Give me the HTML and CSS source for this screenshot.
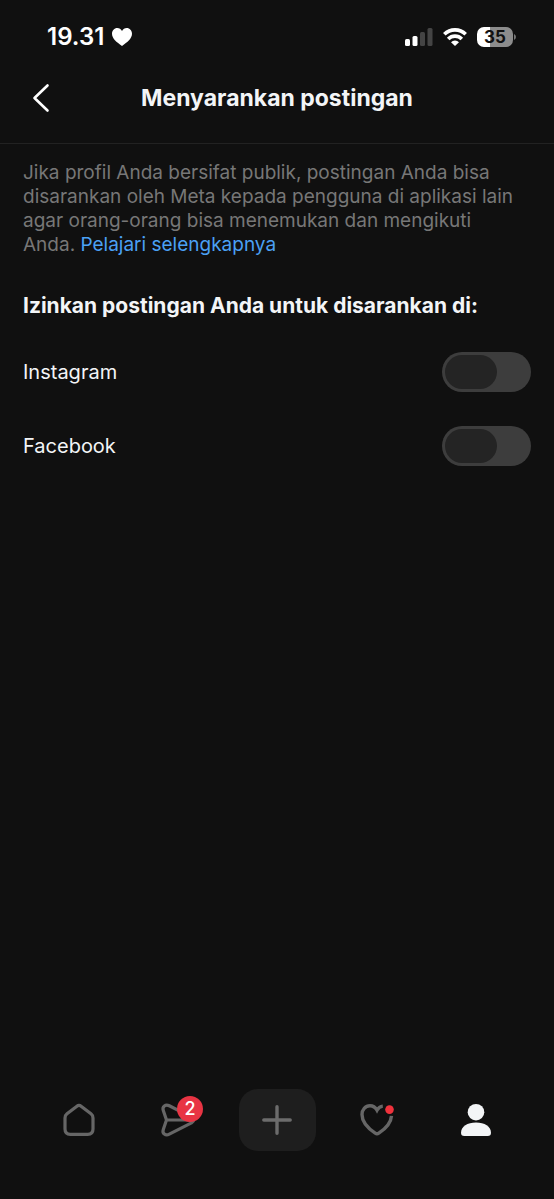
FILE: index.html
```html
<!DOCTYPE html>
<html lang="id">
<head>
<meta charset="utf-8">
<meta name="viewport" content="width=device-width, initial-scale=1">
<title>Menyarankan postingan</title>
<link rel="stylesheet" href="styles.css">
</head>
<body>
<div class="screen">
  <div class="status">
    <div class="status-left">
      <span class="time">19.31</span>
      <svg class="heart" width="20" height="18" viewBox="0 0 20 18" aria-hidden="true"><path d="M10 18C4.500 14.200 0 10.400 0 5.800C0 2.500 2.300 0 5.300 0C7.300 0 9 1.100 10 2.900C11 1.100 12.700 0 14.700 0C17.700 0 20 2.500 20 5.800C20 10.400 15.500 14.200 10 18Z" fill="#fff"/></svg>
    </div>
    <div class="status-right">
      <svg width="28" height="18" viewBox="0 0 28 18" aria-hidden="true"><rect x="0" y="11" width="5" height="7" rx="1.500" fill="#fff"/><rect x="7.500" y="8" width="5" height="10" rx="1.500" fill="#fff"/><rect x="15" y="4" width="5" height="14" rx="1.500" fill="#444"/><rect x="22.500" y="0" width="5" height="18" rx="1.500" fill="#444"/></svg>
      <svg width="24" height="18" viewBox="0 0 24 18" aria-hidden="true"><g fill="none" stroke="#fff" stroke-width="3.600"><path d="M1.300 6.300A15.200 15.200 0 0 1 22.700 6.300"/><path d="M5.200 10.900A9.600 9.600 0 0 1 18.800 10.900"/></g><path d="M12 18L8 14.200A5.800 5.800 0 0 1 16 14.200Z" fill="#fff"/></svg>
      <div class="battery"><span class="battery-level">35</span><svg width="2" height="6" viewBox="0 0 2 6" aria-hidden="true"><path d="M0 0Q2 1 2 3T0 6Z" fill="#777"/></svg></div>
    </div>
  </div>
  <header class="header">
    <button class="back" type="button" aria-label="Kembali"><svg width="18" height="30" viewBox="0 0 18 30" aria-hidden="true"><path d="M15.500 2.500L2.500 15L15.500 27.500" fill="none" stroke="#fff" stroke-width="2.600" stroke-linecap="round" stroke-linejoin="round"/></svg></button>
    <h1 class="title">Menyarankan postingan</h1>
  </header>
  <main class="content">
    <p class="intro">Jika profil Anda bersifat publik, postingan Anda bisa disarankan oleh Meta kepada pengguna di aplikasi lain agar orang-orang bisa menemukan dan mengikuti Anda. <a class="link" href="#">Pelajari selengkapnya</a></p>
    <h2 class="subtitle">Izinkan postingan Anda untuk disarankan di:</h2>
    <div class="row"><label for="instagram">Instagram</label><input class="switch" id="instagram" type="checkbox" role="switch"></div>
    <div class="row"><label for="facebook">Facebook</label><input class="switch" id="facebook" type="checkbox" role="switch"></div>
  </main>
  <nav class="tabs">
    <button class="tab" type="button" aria-label="Beranda"><svg width="36" height="36" viewBox="0 0 36 36" aria-hidden="true"><path d="M15.600 4.400Q18 2.500 20.400 4.400L30 11.800Q32 13.400 32 16V27Q32 32.300 26.700 32.300H9.300Q4 32.300 4 27V16Q4 13.400 6 11.800Z" fill="none" stroke="#666" stroke-width="3.200"/></svg></button>
    <button class="tab" type="button" aria-label="Pesan"><span class="icon"><svg width="36" height="36" viewBox="0 0 36 36" aria-hidden="true"><path d="M3.300 8.500C1.900 4.500 5.500 1.800 9.300 3.700L31.500 15.200Q36 18 31.500 20.800L9.300 32.200C5.500 34.200 1.900 31.500 3.300 27.500L6.500 18ZM6.500 18H31" fill="none" stroke="#666" stroke-width="3.200" stroke-linejoin="round"/></svg><span class="badge">2</span></span></button>
    <button class="tab" type="button" aria-label="Buat"><span class="create"><svg width="30" height="30" viewBox="0 0 30 30" aria-hidden="true"><path d="M15 1.800V28.200M1.800 15H28.200" stroke="#6c6c6c" stroke-width="3.400" stroke-linecap="round"/></svg></span></button>
    <button class="tab" type="button" aria-label="Aktivitas"><svg width="36" height="36" viewBox="0 0 36 36" aria-hidden="true"><path d="M23.800 4.100C21.300 4.300 19.200 6 18 8.200C16.300 5.200 13.700 3.800 11 3.800C6.300 3.800 3 7.600 3 12.500C3 20.500 10 27 16.200 31.200Q18 32.400 19.800 31.200C26 27 32 21 32.500 13.800" fill="none" stroke="#666" stroke-width="3.400"/><circle cx="30.500" cy="7.600" r="4.300" fill="#f0323c"/></svg></button>
    <button class="tab" type="button" aria-label="Profil" aria-current="page"><svg width="36" height="36" viewBox="0 0 36 36" aria-hidden="true"><circle cx="18" cy="10.200" r="8.300" fill="#f3f5f7"/><path d="M3 30.700C3 24.500 9.500 20.500 18 20.500S33 24.500 33 30.700Q33 34 29.700 34H6.300Q3 34 3 30.700Z" fill="#f3f5f7"/></svg></button>
  </nav>
</div>
</body>
</html>
```
FILE: styles.css
```css
* { box-sizing: border-box; }

body {
  margin: 0;
  background: #101010;
  color: #f3f5f7;
  font-family: Inter, "Liberation Sans", sans-serif;
  font-size: 20px;
  line-height: 24px;
}

button {
  padding: 0;
  border: 0;
  background: none;
  color: inherit;
  font: inherit;
}

svg { display: block; }

.screen {
  display: flex;
  flex-direction: column;
  min-height: 100vh;
}

.status {
  display: flex;
  align-items: center;
  justify-content: space-between;
  padding: 22px 38px 0 47px;
  height: 52px;
}

.status-left {
  display: flex;
  align-items: center;
  gap: 8px;
}

.time {
  color: #fff;
  font-size: 24px;
  font-weight: 600;
}

.status-right {
  display: flex;
  align-items: center;
  gap: 10px;
}

.battery {
  display: flex;
  align-items: center;
  gap: 1px;
}

.battery-level {
  width: 36px;
  border-radius: 7px;
  background: linear-gradient(90deg, #fff 35%, #8c8c8c 35%);
  color: #101010;
  font-size: 17px;
  font-weight: 700;
  line-height: 20px;
  text-align: center;
}

.header {
  display: grid;
  grid-template-columns: 60px 1fr 60px;
  align-items: center;
  height: 92px;
  border-bottom: 1px solid #222;
}

.back { padding-left: 32px; }

.title {
  margin: 0;
  font-size: 23px;
  font-weight: 700;
  line-height: 28px;
  text-align: center;
}

.content {
  flex: 1;
  padding: 17px 23px;
}

.intro {
  margin: 0 0 37px;
  padding-right: 8px;
  color: #777;
  font-size: 19px;
}

.link {
  color: #4ba1f5;
  text-decoration: none;
}

.subtitle {
  margin: 0 0 34px;
  font-size: 21px;
  font-weight: 700;
  line-height: 24px;
}

.row {
  display: flex;
  align-items: center;
  justify-content: space-between;
  margin-bottom: 34px;
}

.switch {
  appearance: none;
  width: 89px;
  height: 40px;
  margin: 0;
  padding: 3px;
  border-radius: 20px;
  background: #3d3d3d;
}

.switch::before {
  content: "";
  display: block;
  width: 52px;
  height: 34px;
  border-radius: 17px;
  background: #242424;
}

.switch:checked::before { margin-left: auto; }

.tabs {
  display: grid;
  grid-template-columns: repeat(5, 1fr);
  padding: 0 28px 48px 29px;
}

.tab {
  display: flex;
  align-items: center;
  justify-content: center;
}

.icon { position: relative; }

.badge {
  position: absolute;
  top: -6px;
  left: 17px;
  width: 26px;
  height: 26px;
  border-radius: 50%;
  background: #e83443;
  color: #fff;
  font-size: 18px;
  font-weight: 500;
  line-height: 26px;
  text-align: center;
}

.create {
  display: flex;
  align-items: center;
  justify-content: center;
  width: 77px;
  height: 62px;
  border-radius: 19px;
  background: #1e1e1e;
}
```
